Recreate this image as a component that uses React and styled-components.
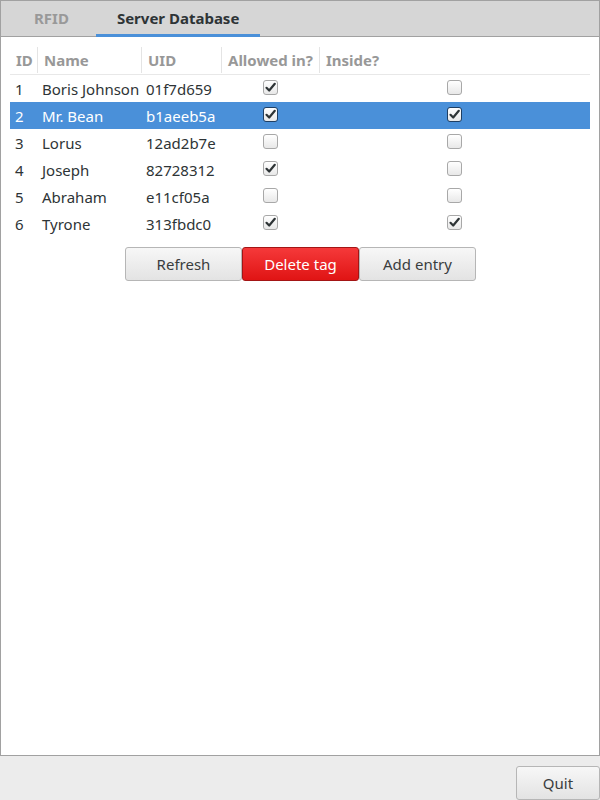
import React from "react";
import styled, { createGlobalStyle } from "styled-components";

const GlobalStyle = createGlobalStyle`
  html, body { margin: 0; padding: 0; background: #ececec; }
  body {
    font-family: "Noto Sans", "DejaVu Sans", sans-serif;
    font-size: 15px;
    color: #2e3436;
  }
  * { box-sizing: border-box; }
`;

const Window = styled.div`
  width: 600px;
  height: 800px;
  display: flex;
  flex-direction: column;
  background: #ececec;
  overflow: hidden;
`;

const Notebook = styled.div`
  flex: 1;
  display: flex;
  flex-direction: column;
  border: 1px solid #a1a1a1;
  background: #ffffff;
  min-height: 0;
`;

const TabBar = styled.div`
  height: 36px;
  display: flex;
  gap: 6px;
  padding-left: 12px;
  background: #d6d6d6;
  border-bottom: 1px solid #a1a1a1;
`;

const Tab = styled.div`
  height: 36px;
  margin-bottom: -1px;
  padding: 1px 21px 0 21px;
  display: flex;
  align-items: center;
  font-weight: 700;
  font-size: 15px;
  color: ${(p) => (p.$active ? "#2e3436" : "#999999")};
  border-bottom: 3px solid ${(p) => (p.$active ? "#4a90d9" : "transparent")};
`;

const Page = styled.div`
  flex: 1;
  padding: 10px 9px 0 9px;
  display: flex;
  flex-direction: column;
  align-items: stretch;
`;

const Grid = styled.div`
  display: grid;
  grid-template-columns: 27px 104px 80px 98px 1fr;
`;

const HeaderRow = styled(Grid)`
  height: 28px;
  border-bottom: 1px solid #e8e8e8;
`;

const HeaderCell = styled.div`
  display: flex;
  align-items: center;
  padding-left: 6px;
  border-left: ${(p) => (p.$first ? "none" : "1px solid #e4e4e4")};
  font-weight: 700;
  color: #989898;
  font-size: 15px;
  margin-bottom: 1px;
`;

const Row = styled(Grid)`
  height: 27px;
  background: ${(p) => (p.$selected ? "#4a90d9" : "transparent")};
  color: ${(p) => (p.$selected ? "#ffffff" : "#2e3436")};
`;

const Cell = styled.div`
  display: flex;
  align-items: center;
  justify-content: ${(p) => (p.$center ? "center" : "flex-start")};
  padding-left: ${(p) => (p.$center ? "0" : "5px")};
  white-space: nowrap;
  overflow: hidden;
`;

const Box = styled.span`
  width: 15px;
  height: 15px;
  border-radius: 3px;
  border: 1px solid ${(p) => (p.$selected ? "#1f3f63" : "#a8a8a8")};
  background: linear-gradient(#ffffff, #e8e8e8);
  display: flex;
  align-items: center;
  justify-content: center;
  margin-top: -2px;
`;

const ButtonRow = styled.div`
  display: flex;
  justify-content: center;
  margin-top: 10px;
  padding-left: 1px;
`;

const Button = styled.button`
  width: 117px;
  height: 34px;
  font-family: "Noto Sans", "DejaVu Sans", sans-serif;
  font-size: 15px;
  font-weight: 400;
  border-radius: 3px;
  cursor: pointer;
  padding: 0;
  border: 1px solid ${(p) => (p.$danger ? "#a31515" : "#b6b6b6")};
  background: ${(p) =>
    p.$danger
      ? "linear-gradient(#f5393a, #e01414)"
      : "linear-gradient(#f7f7f7, #e3e3e3)"};
  color: ${(p) => (p.$danger ? "#ffffff" : "#3a3d3e")};
`;

const Footer = styled.div`
  height: 44px;
  display: flex;
  justify-content: flex-end;
  padding-top: 10px;
`;

const QuitButton = styled(Button)`
  width: 84px;
  height: 34px;
`;

function Check({ checked, selected }) {
  return (
    <Box $selected={selected}>
      {checked && (
        <svg width="13" height="13" viewBox="0 0 13 13">
          <path
            d="M2.5 6.8 L5.2 9.5 L10.8 2.8"
            fill="none"
            stroke="#2e3436"
            strokeWidth="2.2"
            strokeLinecap="round"
            strokeLinejoin="round"
          />
        </svg>
      )}
    </Box>
  );
}

const rows = [
  { id: 1, name: "Boris Johnson", uid: "01f7d659", allowed: true, inside: false },
  { id: 2, name: "Mr. Bean", uid: "b1aeeb5a", allowed: true, inside: true, selected: true },
  { id: 3, name: "Lorus", uid: "12ad2b7e", allowed: false, inside: false },
  { id: 4, name: "Joseph", uid: "82728312", allowed: true, inside: false },
  { id: 5, name: "Abraham", uid: "e11cf05a", allowed: false, inside: false },
  { id: 6, name: "Tyrone", uid: "313fbdc0", allowed: true, inside: true },
];

export default function App() {
  return (
    <Window>
      <GlobalStyle />
      <Notebook>
        <TabBar>
          <Tab>RFID</Tab>
          <Tab $active>Server Database</Tab>
        </TabBar>
        <Page>
          <HeaderRow>
            <HeaderCell $first>ID</HeaderCell>
            <HeaderCell>Name</HeaderCell>
            <HeaderCell>UID</HeaderCell>
            <HeaderCell>Allowed in?</HeaderCell>
            <HeaderCell>Inside?</HeaderCell>
          </HeaderRow>
          {rows.map((r) => (
            <Row key={r.id} $selected={r.selected}>
              <Cell>{r.id}</Cell>
              <Cell>{r.name}</Cell>
              <Cell>{r.uid}</Cell>
              <Cell $center>
                <Check checked={r.allowed} selected={r.selected} />
              </Cell>
              <Cell $center>
                <Check checked={r.inside} selected={r.selected} />
              </Cell>
            </Row>
          ))}
          <ButtonRow>
            <Button>Refresh</Button>
            <Button $danger>Delete tag</Button>
            <Button>Add entry</Button>
          </ButtonRow>
        </Page>
      </Notebook>
      <Footer>
        <QuitButton>Quit</QuitButton>
      </Footer>
    </Window>
  );
}
